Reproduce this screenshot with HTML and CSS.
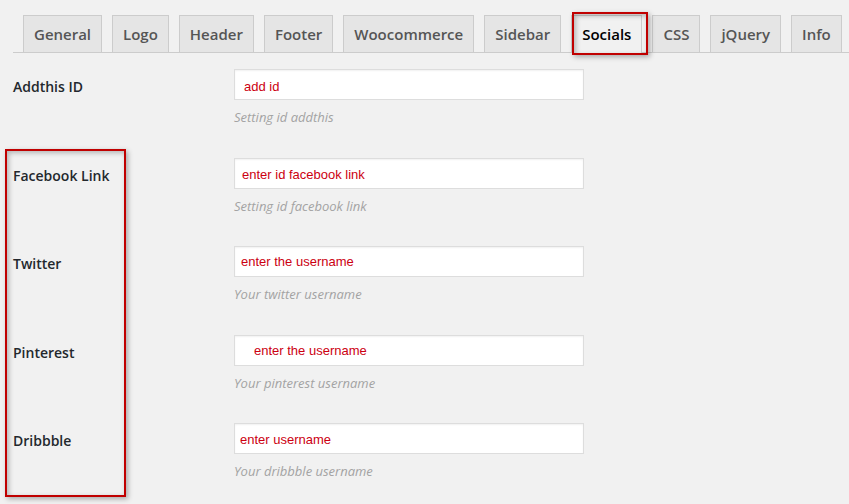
FILE: index.html
```html
<!DOCTYPE html>
<html lang="en">
<head>
<meta charset="utf-8">
<title>Theme Options – Socials</title>
<link rel="stylesheet" href="styles.css">
</head>
<body>
<div class="page">
  <nav class="tabs">
    <span class="tab">General</span>
    <span class="tab">Logo</span>
    <span class="tab">Header</span>
    <span class="tab">Footer</span>
    <span class="tab">Woocommerce</span>
    <span class="tab">Sidebar</span>
    <span class="tab active">Socials</span>
    <span class="tab">CSS</span>
    <span class="tab">jQuery</span>
    <span class="tab">Info</span>
  </nav>

  <div class="form">
    <div class="row">
      <div class="label">Addthis ID</div>
      <div class="field">
        <div class="input pad-a">add id</div>
        <div class="desc">Setting id addthis</div>
      </div>
    </div>
    <div class="row">
      <div class="label">Facebook Link</div>
      <div class="field">
        <div class="input pad-b">enter id facebook link</div>
        <div class="desc">Setting id facebook link</div>
      </div>
    </div>
    <div class="row">
      <div class="label">Twitter</div>
      <div class="field">
        <div class="input pad-c">enter the username</div>
        <div class="desc">Your twitter username</div>
      </div>
    </div>
    <div class="row">
      <div class="label">Pinterest</div>
      <div class="field">
        <div class="input pad-d">enter the username</div>
        <div class="desc">Your pinterest username</div>
      </div>
    </div>
    <div class="row">
      <div class="label">Dribbble</div>
      <div class="field">
        <div class="input pad-e">enter username</div>
        <div class="desc">Your dribbble username</div>
      </div>
    </div>
  </div>

  <div class="mark mark-tab"></div>
  <div class="mark mark-col"></div>
</div>
</body>
</html>
```

FILE: styles.css
```css
html, body {
  margin: 0;
  padding: 0;
  background: #f1f1f1;
  overflow: hidden;
}

body {
  font-family: "Open Sans", "Liberation Sans", sans-serif;
  color: #23282d;
}

.page {
  position: relative;
  width: 849px;
  height: 504px;
}

.tabs {
  display: flex;
  gap: 10px;
  margin-left: 13px;
  padding: 15px 0 0 10px;
  border-bottom: 1px solid #ccc;
}

.tab {
  border: 1px solid #ccc;
  border-bottom: none;
  background: #e5e5e5;
  color: #555;
  font-size: 15px;
  font-weight: 600;
  line-height: 24px;
  padding: 6px 10px;
  white-space: nowrap;
}

.tab.active {
  background: #f1f1f1;
  color: #000;
  margin-bottom: -1px;
  padding-bottom: 7px;
}

.form {
  padding-left: 13px;
}

.row {
  display: flex;
  height: 88.5px;
  box-sizing: border-box;
  padding-top: 16px;
}

.label {
  width: 221px;
  flex: none;
  padding-top: 9px;
  font-size: 14px;
  font-weight: 600;
  line-height: 18px;
  color: #23282d;
}

.field {
  width: 350px;
}

.input {
  height: 31px;
  box-sizing: border-box;
  border: 1px solid #ddd;
  background: #fff;
  box-shadow: inset 0 1px 2px rgba(0, 0, 0, 0.06);
  font-family: "Liberation Sans", Arial, sans-serif;
  font-size: 13px;
  line-height: 30px;
  color: #cc0011;
  white-space: nowrap;
}

.pad-a { padding-left: 9px; padding-top: 3px; line-height: 27px; }
.pad-b { padding-left: 7px; padding-top: 2px; line-height: 28px; }
.pad-c { padding-left: 6px; }
.pad-d { padding-left: 19px; }
.pad-e { padding-left: 5px; padding-top: 1px; line-height: 29px; }

.desc {
  margin-top: 8px;
  font-size: 13px;
  font-style: italic;
  line-height: 18px;
  color: #a3a3a3;
}

.mark {
  position: absolute;
  border: 2px solid #c00000;
  box-shadow: 2px 2px 5px rgba(0, 0, 0, 0.3), inset 2px 2px 5px rgba(0, 0, 0, 0.25);
  pointer-events: none;
}

.mark-tab {
  left: 572px;
  top: 12px;
  width: 72px;
  height: 39px;
}

.mark-col {
  left: 5px;
  top: 149px;
  width: 117px;
  height: 344px;
}
```
